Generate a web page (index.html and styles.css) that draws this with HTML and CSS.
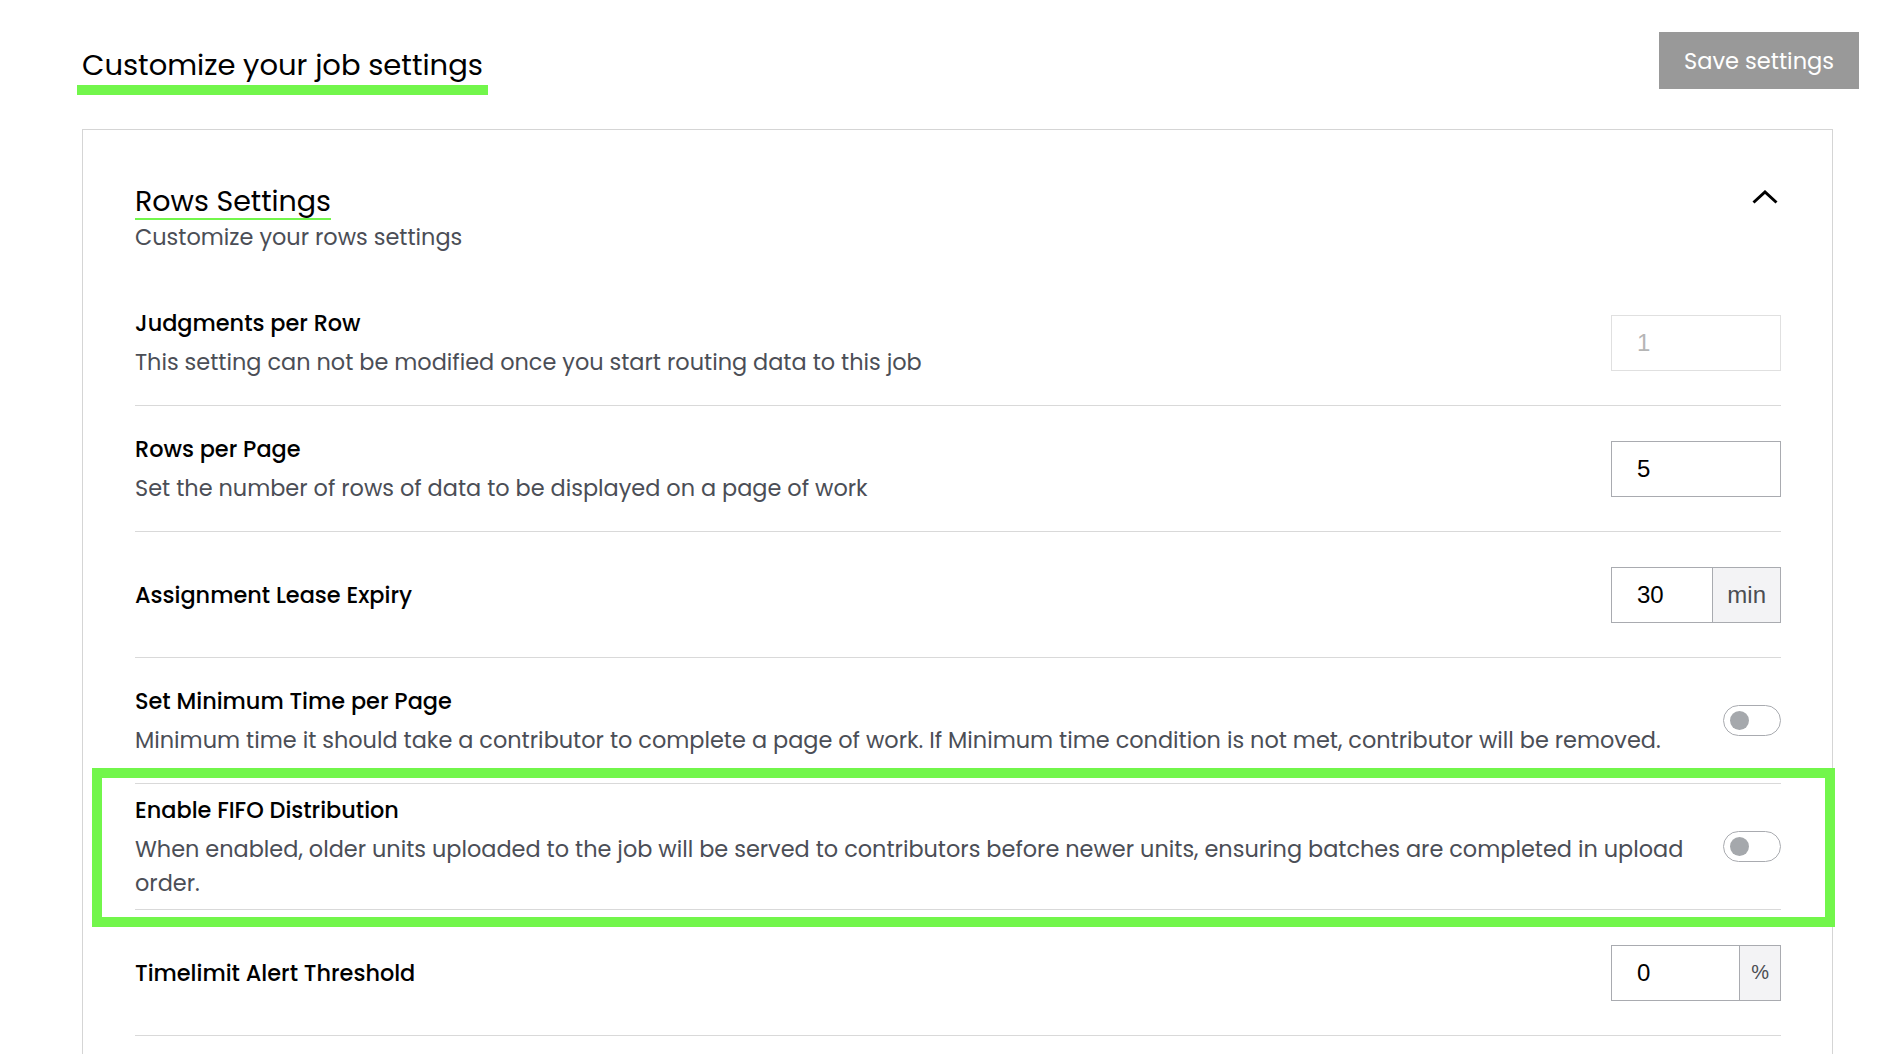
FILE: index.html
```html
<!DOCTYPE html>
<html lang="en">
<head>
  <meta charset="UTF-8">
  <meta name="viewport" content="width=device-width, initial-scale=1.0">
  <title>Job Settings</title>
  <link rel="stylesheet" href="styles.css">
</head>
<body>
  <div class="page">
    <div class="topbar">
      <h1 class="page-title">Customize your job settings</h1>
      <button class="save-btn" type="button">Save settings</button>
    </div>

    <div class="card">
      <div class="card-head">
        <div>
          <h2 class="section-title">Rows Settings</h2>
          <p class="section-sub">Customize your rows settings</p>
        </div>
        <button class="collapse-btn" type="button" aria-label="Collapse">
          <svg width="26" height="14" viewBox="0 0 26 14">
            <polyline points="1.5,12.5 13,2 24.5,12.5" fill="none" stroke="#000" stroke-width="3"/>
          </svg>
        </button>
      </div>

      <div class="setting-row">
        <div class="setting-text">
          <div class="setting-name">Judgments per Row</div>
          <div class="setting-desc">This setting can not be modified once you start routing data to this job</div>
        </div>
        <input class="num-input" type="text" value="1" disabled>
      </div>

      <div class="setting-row">
        <div class="setting-text">
          <div class="setting-name">Rows per Page</div>
          <div class="setting-desc">Set the number of rows of data to be displayed on a page of work</div>
        </div>
        <input class="num-input" type="text" value="5">
      </div>

      <div class="setting-row">
        <div class="setting-text">
          <div class="setting-name">Assignment Lease Expiry</div>
        </div>
        <div class="input-group">
          <input type="text" value="30">
          <span class="addon">min</span>
        </div>
      </div>

      <div class="setting-row">
        <div class="setting-text">
          <div class="setting-name">Set Minimum Time per Page</div>
          <div class="setting-desc">Minimum time it should take a contributor to complete a page of work. If Minimum time condition is not met, contributor will be removed.</div>
        </div>
        <span class="toggle"><span class="knob"></span></span>
      </div>

      <div class="setting-row highlight">
        <div class="setting-text">
          <div class="setting-name">Enable FIFO Distribution</div>
          <div class="setting-desc">When enabled, older units uploaded to the job will be served to contributors before newer units, ensuring batches are completed in upload order.</div>
        </div>
        <span class="toggle"><span class="knob"></span></span>
      </div>

      <div class="setting-row">
        <div class="setting-text">
          <div class="setting-name">Timelimit Alert Threshold</div>
        </div>
        <div class="input-group">
          <input type="text" value="0">
          <span class="addon addon-pct">%</span>
        </div>
      </div>
    </div>
  </div>
</body>
</html>
```

FILE: styles.css
```css
body {
  margin: 0;
  background-color: #fff;
  color: #000;
  font-family: "Poppins", Inter, "Noto Sans", sans-serif;
}
.page {
  padding: 32px 19px 0 82px;
}
.topbar {
  display: flex;
  justify-content: space-between;
  align-items: flex-start;
}
.page-title {
  margin: 0 0 0 -5px;
  padding: 13px 5px 0;
  font-size: 29px;
  font-weight: 400;
  line-height: 40px;
  border-bottom: 10px solid #72f64b;
}
.save-btn {
  height: 57px;
  padding: 0 25px;
  border: none;
  background-color: #999;
  color: #fff;
  font-family: inherit;
  font-size: 22.5px;
  cursor: pointer;
}
.card {
  margin: 34px 26px 0 0;
  padding: 0 51px 60px 52px;
  border: 1px solid #d5d5d5;
}
.card-head {
  display: flex;
  justify-content: space-between;
  align-items: flex-start;
  padding: 54px 0 28px;
}
.section-title {
  width: fit-content;
  margin: 0;
  font-size: 28.5px;
  font-weight: 400;
  line-height: 34px;
  border-bottom: 2px solid #72f64b;
}
.section-sub {
  margin: 2px 0 0;
  font-size: 22.4px;
  line-height: 30px;
  color: #4b4e56;
}
.collapse-btn {
  margin: 6px 3px 0 0;
  padding: 0;
  border: none;
  background: none;
  line-height: 0;
}
.setting-row {
  display: flex;
  align-items: center;
  gap: 28px;
  min-height: 125px;
  border-bottom: 1px solid #d9d9d9;
}
.setting-text {
  flex: 1;
}
.setting-name {
  font-size: 22.4px;
  font-weight: 500;
  line-height: 32px;
}
.setting-desc {
  margin-top: 6px;
  font-size: 22.4px;
  line-height: 34px;
  color: #4b4e56;
}
.num-input,
.input-group {
  box-sizing: border-box;
  width: 170px;
  height: 56px;
  border: 1px solid #a9abb0;
}
.num-input,
.input-group input {
  padding: 0 25px;
  font-family: "Liberation Sans", Arial, sans-serif;
  font-size: 24px;
  color: #000;
  background: #fff;
  outline: none;
}
.num-input:disabled {
  border-color: #e0e0e0;
  color: #b5b5b5;
}
.input-group {
  display: flex;
}
.input-group input {
  flex: 1;
  min-width: 0;
  border: none;
}
.addon {
  display: flex;
  align-items: center;
  padding: 0 14px;
  border-left: 1px solid #a9abb0;
  background-color: #f3f3f5;
  color: #4b4d52;
  font-family: "Liberation Sans", Arial, sans-serif;
  font-size: 24px;
}
.addon-pct {
  padding: 0 11px;
  font-size: 20px;
}
.toggle {
  box-sizing: border-box;
  display: flex;
  align-items: center;
  width: 58px;
  height: 31px;
  padding-left: 6px;
  border: 1px solid #a9abb0;
  border-radius: 16px;
  background: #fff;
}
.knob {
  width: 19px;
  height: 19px;
  border-radius: 50%;
  background-color: #a5a8ac;
}
.highlight {
  position: relative;
}
.highlight::after {
  content: "";
  position: absolute;
  top: -16px;
  bottom: -18px;
  left: -43px;
  right: -54px;
  border: 10px solid #72f64b;
  pointer-events: none;
}
```
